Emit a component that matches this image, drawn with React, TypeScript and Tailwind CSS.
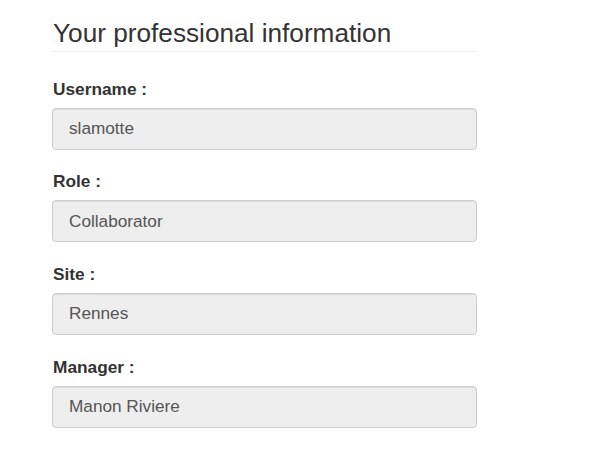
const fields = [
  { label: "Username :", value: "slamotte" },
  { label: "Role :", value: "Collaborator" },
  { label: "Site :", value: "Rennes" },
  { label: "Manager :", value: "Manon Riviere" },
];

export default function App() {
  return (
    <div className="min-h-[476px] bg-white font-['Liberation_Sans',Arial,sans-serif] text-[#333]">
      <div className="w-[425px] ml-[52px] pt-[19px]">
        {/* Header */}
        <div className="border-b border-[#eee] pb-[3px] mb-[25px]">
          <h3 className="text-[26.2px] leading-[1.1] font-normal pl-px">
            Your professional information
          </h3>
        </div>

        {/* Fields */}
        {fields.map(f => (
          <div key={f.label} className="mb-[19.67px]">
            <label className="block text-[17.3px] leading-6 font-bold mb-[7px] pl-px">
              {f.label}
            </label>
            <div className="h-[42px] flex items-center px-4 rounded-[4px] border border-[#ccc] bg-[#eee] text-[17.2px] text-[#555] shadow-[inset_0_1px_1px_rgba(0,0,0,0.075)]">
              {f.value}
            </div>
          </div>
        ))}
      </div>
    </div>
  );
}
